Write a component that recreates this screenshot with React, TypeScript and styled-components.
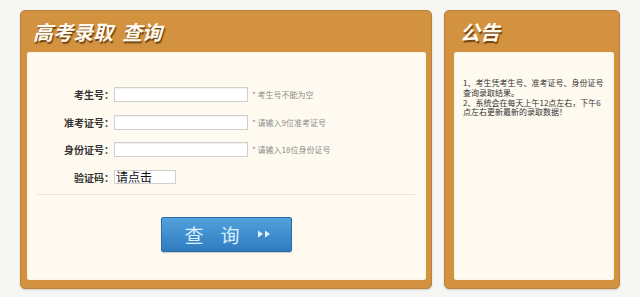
import React from "react";
import styled, { createGlobalStyle } from "styled-components";

const GlobalStyle = createGlobalStyle`
  html, body {
    margin: 0;
    padding: 0;
    background: #f6f6f4;
  }
  body {
    font-family: "Noto Sans CJK SC", "Noto Sans", "Liberation Sans", sans-serif;
  }
`;

const Page = styled.div`
  display: flex;
  gap: 12px;
  padding: 10px 0 0 20px;
  width: 640px;
  height: 297px;
  box-sizing: border-box;
`;

const Panel = styled.section<{ $width: number; $padLeft: number }>`
  width: ${(p) => p.$width}px;
  height: 279px;
  box-sizing: border-box;
  display: flex;
  flex-direction: column;
  padding: 0 5px 8px ${(p) => p.$padLeft}px;
  background: #d3923f;
  border: 1px solid #b9803a;
  border-radius: 5px;
  box-shadow: 0 1px 2px rgba(0, 0, 0, 0.15);
`;

const PanelTitle = styled.h2<{ $indent: number }>`
  margin: 0;
  height: 41px;
  display: flex;
  align-items: center;
  padding-left: ${(p) => p.$indent}px;
  font-size: 20px;
  font-weight: 700;
  font-style: italic;
  color: #fffaf0;
  text-shadow: 1px 2px 1px rgba(80, 40, 0, 0.75);
  white-space: pre;
`;

const PanelBody = styled.div`
  flex: 1;
  background: #fffaef;
  border-radius: 2px;
  box-shadow: inset 0 0 1px rgba(120, 80, 30, 0.3);
  display: flex;
  flex-direction: column;
`;

const Form = styled.div`
  margin: 0 11px 0 10px;
  padding: 35px 0 9px;
  border-bottom: 1px solid #ebe3d3;
  display: flex;
  flex-direction: column;
  gap: 12.5px;
`;

const Row = styled.div`
  display: flex;
  align-items: center;
  height: 15px;
`;

const Label = styled.label`
  width: 77px;
  text-align: right;
  font-size: 10px;
  font-weight: 700;
  color: #333;
  white-space: nowrap;
`;

const Input = styled.input`
  width: 134px;
  height: 15px;
  box-sizing: border-box;
  margin: 0;
  padding: 0 3px;
  border: 1px solid #cfcfcf;
  background: #fff;
  box-shadow: inset 0 1px 1px rgba(0, 0, 0, 0.06);
  outline: none;
`;

const Hint = styled.span`
  margin-left: 4px;
  font-size: 8px;
  color: #8a8a8a;
  white-space: nowrap;
`;

const Captcha = styled.div`
  width: 62px;
  height: 14px;
  box-sizing: border-box;
  border: 1px solid #cfcfcf;
  background: #fff;
  font-size: 12px;
  line-height: 12px;
  color: #111;
  padding-left: 1px;
  white-space: nowrap;
`;

const Actions = styled.div`
  display: flex;
  justify-content: center;
  padding-top: 22px;
`;

const SubmitButton = styled.button`
  width: 131px;
  height: 35px;
  display: flex;
  align-items: center;
  justify-content: center;
  gap: 17px;
  padding: 0 0 0 2px;
  border: 1px solid #2c6ca8;
  border-radius: 2px;
  background: linear-gradient(#52a2dd, #2f7bbf);
  color: #dcefff;
  font-family: "Noto Sans CJK SC", sans-serif;
  font-size: 19px;
  cursor: pointer;
  box-shadow: 0 1px 1px rgba(0, 0, 0, 0.2);
`;

const Notice = styled.div`
  padding: 26px 0 0 9px;
  font-size: 8px;
  line-height: 9.8px;
  color: #333;
  white-space: nowrap;
`;

const Arrows = () => (
  <svg width="14" height="8" viewBox="0 0 14 8">
    <path d="M1 0.5 L6 4 L1 7.5 Z M8 0.5 L13 4 L8 7.5 Z" fill="#e6f3ff" />
  </svg>
);

const fields = [
  { label: "考生号：", hint: "* 考生号不能为空" },
  { label: "准考证号：", hint: "* 请输入9位准考证号" },
  { label: "身份证号：", hint: "* 请输入18位身份证号" },
];

export default function App() {
  return (
    <>
      <GlobalStyle />
      <Page>
        <Panel $width={412} $padLeft={6}>
          <PanelTitle $indent={6}>{"高考录取  查询"}</PanelTitle>
          <PanelBody>
            <Form>
              {fields.map((f) => (
                <Row key={f.label}>
                  <Label>{f.label}</Label>
                  <Input type="text" />
                  <Hint>{f.hint}</Hint>
                </Row>
              ))}
              <Row>
                <Label>验证码：</Label>
                <Captcha>请点击</Captcha>
              </Row>
            </Form>
            <Actions>
              <SubmitButton>
                <span>查</span>
                <span>询</span>
                <Arrows />
              </SubmitButton>
            </Actions>
          </PanelBody>
        </Panel>
        <Panel $width={176} $padLeft={9}>
          <PanelTitle $indent={6}>公告</PanelTitle>
          <PanelBody>
            <Notice>
              1、考生凭考生号、准考证号、身份证号
              <br />
              查询录取结果。
              <br />
              2、系统会在每天上午12点左右，下午6
              <br />
              点左右更新最新的录取数据！
            </Notice>
          </PanelBody>
        </Panel>
      </Page>
    </>
  );
}
